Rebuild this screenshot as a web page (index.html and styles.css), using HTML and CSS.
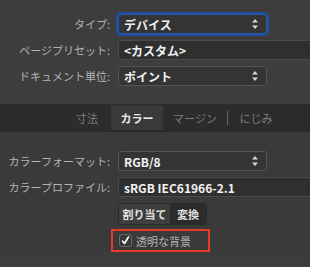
FILE: index.html
```html
<!DOCTYPE html>
<html lang="ja">
<head>
    <meta charset="UTF-8">
    <title>ドキュメント設定</title>
    <link rel="stylesheet" href="styles.css">
</head>
<body>
    <div class="top">
        <div class="row">
            <span class="label">タイプ:</span>
            <div class="select focus">デバイス
                <svg class="arrows" width="6" height="10" viewBox="0 0 6 10"><path d="M3 0 L6 3.5 H0 Z M3 10 L6 6.5 H0 Z" fill="#d8d8d8"/></svg>
            </div>
        </div>
        <div class="row">
            <span class="label">ページプリセット:</span>
            <div class="field wide">&lt;カスタム&gt;</div>
        </div>
        <div class="row">
            <span class="label">ドキュメント単位:</span>
            <div class="select">ポイント
                <svg class="arrows" width="6" height="10" viewBox="0 0 6 10"><path d="M3 0 L6 3.5 H0 Z M3 10 L6 6.5 H0 Z" fill="#d8d8d8"/></svg>
            </div>
        </div>
    </div>

    <div class="tabs">
        <div class="tab t1">寸法</div>
        <div class="tab t2 active">カラー</div>
        <div class="tab t3">マージン</div>
        <div class="sep"></div>
        <div class="tab t4">にじみ</div>
    </div>

    <div class="content">
        <div class="row">
            <span class="label">カラーフォーマット:</span>
            <div class="select">RGB/8
                <svg class="arrows" width="6" height="10" viewBox="0 0 6 10"><path d="M3 0 L6 3.5 H0 Z M3 10 L6 6.5 H0 Z" fill="#d8d8d8"/></svg>
            </div>
        </div>
        <div class="row">
            <span class="label">カラープロファイル:</span>
            <div class="field wide">sRGB IEC61966-2.1</div>
        </div>
        <div class="row">
            <span class="label"></span>
            <div class="segment">
                <div class="seg">割り当て</div>
                <div class="seg on">変換</div>
            </div>
        </div>
        <div class="check-row">
            <div class="highlight">
                <span class="box">
                    <svg width="11" height="11" viewBox="0 0 11 11"><path d="M2.5 6 L4.5 8.5 L8.5 2" fill="none" stroke="#fff" stroke-width="1.6" stroke-linecap="round" stroke-linejoin="round"/></svg>
                </span>
                <span class="check-label">透明な背景</span>
            </div>
        </div>
    </div>
</body>
</html>
```

FILE: styles.css
```css
body {
    margin: 0;
    background-color: #3c3c3c;
    font-family: "Noto Sans CJK JP", "Liberation Sans", sans-serif;
    font-size: 11px;
    color: #e6e6e6;
    overflow: hidden;
}

.top {
    padding: 14px 0 18px 0;
    display: flex;
    flex-direction: column;
    gap: 6px;
    background-color: #3d3d3d;
}

.row {
    display: flex;
    align-items: center;
    height: 20px;
}

.label {
    width: 110px;
    text-align: right;
    color: #b4b4b4;
    font-size: 11px;
    margin-right: 8px;
    flex-shrink: 0;
}

.select,
.field {
    box-sizing: border-box;
    height: 20px;
    width: 149px;
    padding: 0 0 0 5px;
    background-color: #343434;
    border: 1px solid #555;
    border-radius: 3px;
    font-size: 12px;
    font-weight: bold;
    color: #f2f2f2;
    display: flex;
    align-items: center;
    position: relative;
}

.field.wide {
    width: 200px;
    border-right: none;
    border-radius: 3px 0 0 3px;
    background-color: #2f2f2f;
    border-color: #4a4a4a;
}

.select.focus {
    box-shadow: 0 0 0 2px #1f4f9f;
    border-color: #2a5cae;
}

.arrows {
    position: absolute;
    right: 8px;
    top: 4px;
}

.tabs {
    display: flex;
    height: 24px;
    background-color: #2c2c2c;
    border-bottom: 2px solid #2a2a2a;
    padding-top: 2px;
    padding-left: 63px;
}

.tab {
    display: flex;
    align-items: center;
    justify-content: center;
    color: #7c7c7c;
    font-size: 11px;
}

.t1 { width: 48px; }
.t2 { width: 52px; }
.t3 { width: 64px; }
.t4 { width: 56px; }

.tab.active {
    background-color: #3a3a3a;
    color: #ededed;
    font-weight: bold;
}

.sep {
    width: 1px;
    height: 14px;
    margin-top: 5px;
    background-color: #666;
}

.content {
    background-color: #3a3a3a;
    padding-top: 19px;
    display: flex;
    flex-direction: column;
    gap: 6px;
}

.segment {
    display: flex;
    height: 20px;
    margin-top: 2px;
    border: 1px solid #2a2a2a;
    border-radius: 3px;
    overflow: hidden;
}

.seg {
    display: flex;
    align-items: center;
    justify-content: center;
    font-size: 11px;
    font-weight: bold;
    color: #e0e0e0;
    background-color: #3e3e3e;
    width: 51px;
}

.seg.on {
    background-color: #2b2b2b;
    width: 36px;
}

.check-row {
    padding-left: 111px;
}

.highlight {
    box-sizing: border-box;
    width: 99px;
    height: 23px;
    border: 2px solid #e83a24;
    display: flex;
    align-items: center;
    padding-left: 6px;
    gap: 4px;
}

.box {
    box-sizing: border-box;
    width: 13px;
    height: 13px;
    border: 1px solid #6a6a6a;
    border-radius: 3px;
    background-color: #383838;
    display: flex;
    align-items: center;
    justify-content: center;
}

.check-label {
    color: #b4b4b4;
    font-size: 11px;
}
```
